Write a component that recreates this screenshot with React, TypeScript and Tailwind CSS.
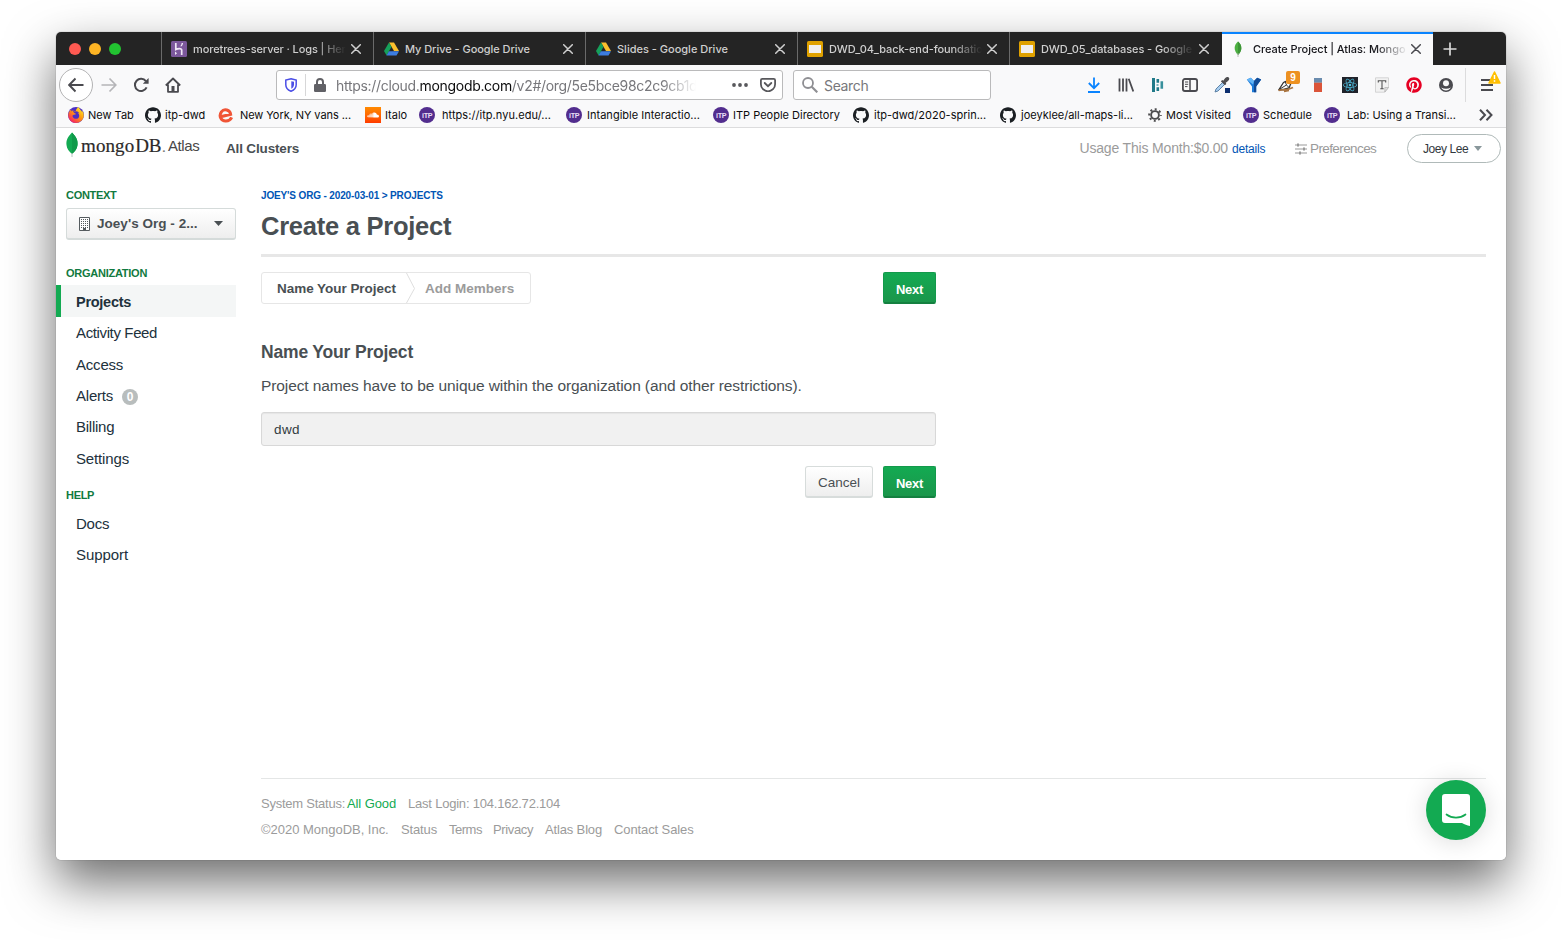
import type { ReactNode } from "react";
import { FaPinterest, FaSoundcloud } from "react-icons/fa";
import { SiGithub, SiReact, SiFirefoxbrowser } from "react-icons/si";

const DriveIcon = () => (
  <svg width="16" height="14" viewBox="-1 0 16 14">
    <path d="M5 .5h5l5 8.500h-5z" fill="#fbc02d" />
    <path d="M5 .5 7.500 4.800 2.600 13.400 0 9z" fill="#16a05a" />
    <path d="M4.900 9.200H15l-2.500 4.300h-10z" fill="#3d7de0" />
  </svg>
);

const SlidesIcon = () => (
  <svg width="16" height="16" viewBox="0 0 16 16">
    <rect width="16" height="16" rx="1.600" fill="#dfa100" />
    <rect x="2" y="4" width="12" height="8" fill="#f0efef" />
  </svg>
);

const HerokuIcon = () => (
  <svg width="16" height="16" viewBox="0 0 16 16">
    <rect width="16" height="16" rx="1.500" fill="#7c589c" />
    <path d="M4.800 2v6.600c1.700-.8 5.900-1.900 5.900.6V14" fill="none" stroke="#eee6f5" strokeWidth="1.700" />
    <path d="M4 10.400V14l2.100-1.800zM9.200 5.200c.9-.9 1.300-1.900 1.400-3.200h1.500c-.2 1.400-.6 2.400-1.400 3.200z" fill="#eee6f5" />
  </svg>
);

const LeafSmall = () => (
  <svg width="8" height="16" viewBox="0 0 8 16">
    <path d="M4 .5C8.200 4 8.700 9.200 4 14 -.7 9.200-.2 4 4 .5z" fill="#4caf41" />
    <path d="M4 .5C8.200 4 8.700 9.200 4 14z" fill="#3c9436" />
    <path d="M4 12v4" stroke="#aaa" strokeWidth=".8" />
  </svg>
);

const Cross = ({ color }: { color: string }) => (
  <svg width="10" height="10" viewBox="0 0 10 10" className="shrink-0">
    <path d="M.7.7l8.600 8.600M9.300.7.7 9.300" stroke={color} strokeWidth="1.500" strokeLinecap="round" />
  </svg>
);

const ItpIcon = () => (
  <svg width="16" height="16" viewBox="0 0 16 16">
    <circle cx="8" cy="8" r="8" fill="#522d8e" />
    <text x="8.200" y="10.900" textAnchor="middle" fontFamily="Liberation Sans" fontWeight="700" fontSize="7.200" letterSpacing="-.3" fill="#e8dff5">iTP</text>
  </svg>
);

const EventbriteIcon = () => (
  <svg width="16" height="16" viewBox="0 0 16 16">
    <path d="M2.600 9.800 12.600 7.300C12 2.900 6.200 1.200 3.400 4.800 .4 9 3.200 14.300 8 14c2.600-.1 4.600-1.500 5.700-3.700" fill="none" stroke="#f05537" strokeWidth="3" />
  </svg>
);

const GearIcon = () => (
  <svg width="14" height="14" viewBox="0 0 14 14" fill="none" stroke="#4b4b4d">
    <circle cx="7" cy="7" r="3.900" strokeWidth="1.900" />
    <circle cx="7" cy="7" r="5.800" strokeWidth="2" strokeDasharray="2 2.555" strokeDashoffset="1" />
  </svg>
);

type Tab = { title: string; icon: ReactNode; fade: boolean; track: string };
const tabs: Tab[] = [
  { title: "moretrees-server · Logs | Heroku", icon: <HerokuIcon />, fade: true, track: "tracking-[-0.1px]" },
  { title: "My Drive - Google Drive", icon: <DriveIcon />, fade: false, track: "tracking-[-0.05px]" },
  { title: "Slides - Google Drive", icon: <DriveIcon />, fade: false, track: "tracking-normal" },
  { title: "DWD_04_back-end-foundations", icon: <SlidesIcon />, fade: true, track: "tracking-[-0.08px]" },
  { title: "DWD_05_databases - Google Slides", icon: <SlidesIcon />, fade: true, track: "tracking-[-0.08px]" },
];

const fadeMask = "[mask-image:linear-gradient(to_right,black_122px,transparent_153px)]";

function TabBar() {
  return (
    <div className="flex h-[33px] shrink-0 bg-[#242424] text-[11px] font-medium text-[#cfcfcf]">
      <div className="flex w-[105px] items-center gap-2 pl-[13px]">
        <span className="size-3 rounded-full bg-[#ff5a52]" />
        <span className="size-3 rounded-full bg-[#fdb424]" />
        <span className="size-3 rounded-full bg-[#22c331]" />
      </div>
      {tabs.map((t) => (
        <div key={t.title} className="flex w-[212px] items-center border-l border-[#6a6a6a] pl-[9px]">
          <span className="flex w-[22px]">{t.icon}</span>
          <span className={`w-[153px] overflow-hidden whitespace-nowrap pt-px ${t.track} ${t.fade ? fadeMask : ""}`}>{t.title}</span>
          <span className="ml-[5px]"><Cross color="#cfcfcf" /></span>
        </div>
      ))}
      <div className="ml-px flex w-[211px] items-center border-t-2 border-[#0a84ff] bg-[#f9f9fa] pb-[2px] pl-[12px] text-[#15151a]">
        <span className="flex w-[19px]"><LeafSmall /></span>
        <span className="w-[153px] overflow-hidden whitespace-nowrap pt-px tracking-[-0.05px] [mask-image:linear-gradient(to_right,black_122px,transparent_155px)]">
          Create Project | Atlas: MongoDB
        </span>
        <span className="ml-[5px]"><Cross color="#4a4a4f" /></span>
      </div>
      <div className="flex items-center pl-[10px]">
        <svg width="14" height="14" viewBox="0 0 14 14"><path d="M7 .5v13M.5 7h13" stroke="#dadada" strokeWidth="1.700" /></svg>
      </div>
    </div>
  );
}

const extensionIcons: ReactNode[] = [
  <svg width="16" height="16" viewBox="0 0 16 16" fill="none" stroke="#0a84ff" strokeWidth="1.800"><path d="M8 .5v10.500M2.800 6 8 11.200 13.200 6M2 15h12" /></svg>,
  <svg width="16" height="16" viewBox="0 0 16 16" fill="none" stroke="#4a4a4f" strokeWidth="1.800"><path d="M1.500 1.500v13M5 1.500v13M8.500 1.500v13M10.700 1.800l4.600 12.600" /></svg>,
  <svg width="16" height="16" viewBox="0 0 16 16"><path d="M2 1h3v14H2zM6.500 2h2.600v3.800H6.500zM6.500 10.200h2.600V14H6.500z" fill="#217a89" /><path d="M10.500 4.300h2.600v7.500h-2.600z" fill="#38909c" /><path d="M6.500 7h2v2h-2z" fill="#7fb8bf" /></svg>,
  <svg width="16" height="16" viewBox="0 0 16 16" fill="none" stroke="#4a4a4f"><rect x=".9" y="2" width="14.200" height="12" rx="2" strokeWidth="1.800" /><path d="M8 2v12" strokeWidth="1.500" /><path d="M3 5h3.200M3 7.300h3.200M3 9.600h2.500" /></svg>,
  <svg width="16" height="16" viewBox="0 0 16 16"><path d="M1 15 2 12 8.500 5.500 10.500 7.500 4 14z" fill="#a7cdf0" stroke="#53799e" strokeWidth=".9" /><path d="m6.800 4.300 1.500-1.200 1 .6c1.800-3 4-4.600 5.500-3.200 1.300 1.600-.4 3.600-3.100 5.300l.6 1.100-1.400 1.400z" fill="#4d4d50" /><path d="M11 11h5v5h-5z" fill="#0c2e6e" /></svg>,
  <svg width="16" height="16" viewBox="0 0 16 16"><path d="M.8 2.500 4.800.8 8 4l3.200-3.200 4 1.700-5 7v5.700H6V9.500z" fill="#1c7ad8" /><path d="M.8 2.500 4.800.8 8 4 7 7.500z" fill="#63b5f7" /><path d="m8 4 3.200-3.200 4 1.700-5 7v5.700H8z" fill="#124b96" /></svg>,
  <svg width="16" height="16" viewBox="0 0 16 16"><path d="M1 12.500 5.500 5.500 9 4l4 2-2 5-5.500 1.500z" fill="#fff" stroke="#333" strokeWidth="1.300" /><path d="M1 12.500 8.500 8 7 4.500M8.500 8l2.800 2.800" stroke="#333" fill="none" /><path d="M.5 13.500c4-2 6 1.300 14.500-3M6 14.500l5-1" stroke="#aa7541" strokeWidth="1.700" fill="none" /></svg>,
  <svg width="16" height="16" viewBox="0 0 16 16"><path d="M4 1h8v4.500H4z" fill="#6b8cae" /><path d="M4 5.500h8V15H4z" fill="#db5439" /><path d="M4 5h8v1H4z" fill="#9c8c95" /></svg>,
  <span className="flex size-4 items-center justify-center bg-[#20232a]"><SiReact size={14} color="#4fbfdf" /></span>,
  <svg width="16" height="16" viewBox="0 0 16 16"><path d="M1.500.8h13v9.700l-3.700 4.700H1.500z" fill="#f2f2f2" stroke="#cdcdcd" strokeWidth=".8" /><path d="M10.800 15v-4.500h3.700z" fill="#ddd" stroke="#aaa" strokeWidth=".6" /><path d="M4.300 5.500V3.700h7.400v1.800M8 3.700v8M6.300 11.700h3.400" stroke="#555" strokeWidth="1.100" fill="none" /></svg>,
  <FaPinterest size={16} color="#e60023" />,
  <svg width="16" height="16" viewBox="0 0 16 16"><circle cx="8" cy="8" r="7" fill="#4a4a4f" /><circle cx="8" cy="6.200" r="3" fill="#f9f9fa" /><path d="M3.200 10.500c3 1.600 6.600 1.600 9.600 0-1 2-2.700 3-4.800 3s-3.800-1-4.800-3z" fill="#f9f9fa" /></svg>,
];

function Toolbar() {
  return (
    <div className="flex h-[40px] shrink-0 items-center bg-[#f9f9fa] pl-[3px] text-[14px]">
      <div className="flex size-[34px] items-center justify-center rounded-full border border-[#b3b3b4] bg-white">
        <svg width="16" height="16" viewBox="0 0 16 16" fill="none" stroke="#4a4a4f" strokeWidth="1.900"><path d="M15.500 8H1.500M7.500 1.500 1.200 8l6.300 6.500" /></svg>
      </div>
      <svg className="ml-2" width="16" height="16" viewBox="0 0 16 16" fill="none" stroke="#b5b5b8" strokeWidth="1.700"><path d="M.5 8h14M8.500 1.500 14.800 8l-6.300 6.500" /></svg>
      <svg className="ml-4" width="16" height="16" viewBox="0 0 16 16"><path d="M12.900 4.200A6.100 6.100 0 1 0 13.600 10.400" fill="none" stroke="#4a4a4f" strokeWidth="2" /><path d="M15.600 1v5.800H9.800z" fill="#4a4a4f" /></svg>
      <svg className="ml-4" width="16" height="16" viewBox="0 0 16 16"><path d="M.8 8.500 8 1.500l7.200 7M3 7.500v7.300h10V7.500" fill="none" stroke="#4a4a4f" strokeWidth="1.800" strokeLinejoin="round" /><path d="M6.500 9h3v5.500h-3z" fill="#4a4a4f" /></svg>
      <div className="ml-[95px] flex h-[30px] w-[507px] items-center rounded-[3px] border border-[#bababb] bg-white pl-[8px]">
        <svg width="12" height="14" viewBox="0 0 12 14"><path d="M6 .8 11.200 2v4.800c0 3-2.200 5.300-5.200 6.500C3 12.100.8 9.800.8 6.800V2z" fill="none" stroke="#4b4ee6" strokeWidth="1.500" /><path d="M6.300 3.300v7.500C8 9.800 9 8.300 9 6.500V3.800z" fill="#4b4ee6" /></svg>
        <span className="ml-[8px] h-[22px] w-px bg-[#d7d7d8]" />
        <svg className="ml-[8px]" width="12" height="14" viewBox="0 0 12 14"><rect y="6" width="12" height="8" rx="1.300" fill="#616166" /><path d="M3 6.500V4a3 3 0 0 1 6 0v2.500" fill="none" stroke="#616166" strokeWidth="2" /></svg>
        <span className="ml-[10px] w-[360px] overflow-hidden whitespace-nowrap tracking-[-0.31px] text-[#77777b] [mask-image:linear-gradient(to_right,black_325px,transparent_360px)]">
          https://cloud.<span className="text-[#0c0c0d]">mongodb.com</span>/v2#/org/5e5bce98c2c9cb1d
        </span>
        <svg className="ml-[36px]" width="16" height="4" viewBox="0 0 16 4" fill="#58585c"><circle cx="2" cy="2" r="1.900" /><circle cx="8" cy="2" r="1.900" /><circle cx="14" cy="2" r="1.900" /></svg>
        <svg className="ml-[12px]" width="16" height="14" viewBox="0 0 16 14" fill="none" stroke="#58585c" strokeWidth="1.800"><path d="M2.300.9h11.400c.8 0 1.400.6 1.400 1.400v3.900a7.100 7.100 0 0 1-14.200 0V2.300C.9 1.500 1.500.9 2.300.9z" /><path d="M4.700 5 8 8.200 11.300 5" strokeLinecap="round" /></svg>
      </div>
      <div className="ml-[10px] flex h-[30px] w-[198px] items-center rounded-[3px] border border-[#bababb] bg-white pl-[8px] text-[#77777b]">
        <svg width="16" height="16" viewBox="0 0 16 16" fill="none" stroke="#8f8f93"><circle cx="6" cy="6" r="5" strokeWidth="1.800" /><path d="m9.700 9.700 5.600 5.600" strokeWidth="2.200" /></svg>
        <span className="ml-[6px] tracking-[-0.35px]">Search</span>
      </div>
      <div className="ml-[95px] flex gap-4">
        {extensionIcons.map((icon, i) => (
          <div key={i} className="relative size-4">
            {icon}
            {i === 6 && <span className="absolute left-[8px] top-[-6px] flex h-[13px] w-[14px] items-center justify-center rounded-[2px] bg-[#ed9121] font-['Liberation_Sans'] text-[10px] font-bold text-white">9</span>}
          </div>
        ))}
      </div>
      <span className="ml-[11px] h-[34px] w-px bg-[#dcdcdd]" />
      <div className="relative ml-[15px]">
        <svg width="12" height="12" viewBox="0 0 12 12" stroke="#4a4a4f" strokeWidth="1.900"><path d="M0 1h12M0 6h12M0 11h12" /></svg>
        <svg className="absolute left-[7px] top-[-8px]" width="13" height="13" viewBox="0 0 13 13"><path d="M6.500 1 12 12H1z" fill="#ffbf00" stroke="#ffbf00" strokeLinejoin="round" strokeWidth="1.500" /><path d="M6.500 4v4M6.500 9.300v1.500" stroke="#fff" strokeWidth="1.500" /></svg>
      </div>
    </div>
  );
}

const github = <SiGithub size={16} color="#1b1f23" />;
const bookmarks: { label: string; icon: ReactNode; width: string; iconWidth: string }[] = [
  { label: "New Tab", icon: <FirefoxIcon />, width: "w-[77px]", iconWidth: "w-[20px]" },
  { label: "itp-dwd", icon: github, width: "w-[73px]", iconWidth: "w-[20px]" },
  { label: "New York, NY vans ...", icon: <EventbriteIcon />, width: "w-[147px] tracking-[-0.07px]", iconWidth: "w-[22px]" },
  { label: "Italo", icon: <span className="flex size-4 items-center justify-center bg-gradient-to-b from-[#ff8a00] to-[#ff3a00]"><FaSoundcloud size={12} color="#fff" /></span>, width: "w-[54px]", iconWidth: "w-[20px]" },
  { label: "https://itp.nyu.edu/...", icon: <ItpIcon />, width: "w-[147px] tracking-[0.05px]", iconWidth: "w-[23px]" },
  { label: "Intangible Interactio...", icon: <ItpIcon />, width: "w-[147px] tracking-[0.02px]", iconWidth: "w-[21px]" },
  { label: "ITP People Directory", icon: <ItpIcon />, width: "w-[140px]", iconWidth: "w-[20px]" },
  { label: "itp-dwd/2020-sprin...", icon: github, width: "w-[147px]", iconWidth: "w-[21px]" },
  { label: "joeyklee/all-maps-li...", icon: github, width: "w-[148px]", iconWidth: "w-[21px]" },
  { label: "Most Visited", icon: <GearIcon />, width: "w-[95px] tracking-[0.05px]", iconWidth: "w-[18px]" },
  { label: "Schedule", icon: <ItpIcon />, width: "w-[81px] tracking-[0.05px]", iconWidth: "w-[20px]" },
  { label: "Lab: Using a Transi...", icon: <ItpIcon />, width: "w-[155px]", iconWidth: "w-[23px]" },
];

function FirefoxIcon() {
  return (
    <span className="relative flex size-4 rounded-full bg-[#4b2fc4]">
      <svg width="0" height="0" className="absolute">
        <defs>
          <linearGradient id="fx" x1="1" y1="0" x2="0.200" y2="1">
            <stop offset="0.150" stopColor="#ffe226" />
            <stop offset="0.500" stopColor="#ff980e" />
            <stop offset="1" stopColor="#f5156c" />
          </linearGradient>
        </defs>
      </svg>
      <SiFirefoxbrowser size={16} className="fill-[url(#fx)]" />
    </span>
  );
}

function BookmarksBar() {
  return (
    <div className="flex h-[23px] shrink-0 items-center border-b border-[#dcdcdd] bg-[#f9f9fa] pb-[4px] pl-[12px] pt-[2px] text-[11px] text-[#0c0c0d]">
      {bookmarks.map((b) => (
        <div key={b.label} className={`flex shrink-0 items-center whitespace-nowrap ${b.width}`}>
          <span className={`flex shrink-0 ${b.iconWidth}`}>{b.icon}</span>
          {b.label}
        </div>
      ))}
      <svg width="14" height="12" viewBox="0 0 14 12" fill="none" stroke="#4a4a4f" strokeWidth="2"><path d="m1 .7 5 5.300-5 5.300M7.500.7l5 5.300-5 5.300" /></svg>
    </div>
  );
}

function PageHeader() {
  return (
    <header className="flex h-[40px] items-center pl-[10px] pr-[5px]">
      <svg className="mb-[6px]" width="12" height="26" viewBox="0 0 12 26">
        <path d="M6 .5C10.500 5 12 8.500 11.500 13c-.4 4-2.500 6.500-5.500 9C3 19.500.9 17 .5 13 0 8.500 1.500 5 6 .5z" fill="#13aa52" />
        <path d="M6 .5C10.500 5 12 8.500 11.500 13c-.4 4-2.500 6.500-5.500 9z" fill="#109a4a" />
        <path d="M6 21v4" stroke="#b8c4c2" />
      </svg>
      <span className="ml-[3px] w-[87px] whitespace-nowrap pb-[3px] font-['Liberation_Serif'] text-[19px] leading-6 text-[#2c2a29] [-webkit-text-stroke:0.2px]">
        <span className="tracking-[0.1px]">mongo</span><span className="ml-[1px] tracking-[-0.3px]">DB</span><span className="ml-px text-[15px] text-[#777]">.</span>
      </span>
      <span className="w-[58px] pb-[3px] text-[15px] tracking-[-0.4px] text-[#494747]">Atlas</span>
      <span className="pt-[2px] text-[13.500px] font-bold tracking-[-0.16px]">All Clusters</span>
      <span className="ml-auto whitespace-nowrap pt-px text-[14px] tracking-[-0.17px] text-[#9b9b9b]">Usage This Month:$0.00</span>
      <a className="ml-[4px] w-[63px] pt-[2px] text-[12px] tracking-[-0.2px] text-[#0055b5]">details</a>
      <svg className="mt-px" width="12" height="12" viewBox="0 0 12 12" stroke="#999" fill="none"><path d="M0 2h12M0 6h12M0 10h12" /><path d="M3 .5v3M9 4.500v3M5 8.500v3" strokeWidth="2" /></svg>
      <span className="ml-[3px] w-[97px] pt-[2px] text-[13.500px] tracking-[-0.6px] text-[#9b9b9b]">Preferences</span>
      <button className="flex h-[29px] w-[94px] items-center rounded-full border border-[#b0bab9] pl-[15px] text-[12px] tracking-[-0.45px] text-[#31383d]">
        <span className="w-[51px] pt-px text-left">Joey Lee</span>
        <svg width="8" height="5" viewBox="0 0 8 5"><path d="M0 0h8L4 5z" fill="#89979b" /></svg>
      </button>
    </header>
  );
}

const orgItems = [
  { label: "Activity Feed", track: "tracking-[-0.37px]" },
  { label: "Access", track: "tracking-[-0.2px]" },
  { label: "Alerts", track: "tracking-[-0.2px]" },
  { label: "Billing", track: "tracking-[-0.25px]" },
  { label: "Settings", track: "tracking-[-0.15px]" },
];

function Sidebar() {
  return (
    <aside className="w-[180px] pt-[20px] text-[15px] text-[#21313c]">
      <h3 className="ml-[10px] text-[11px] font-bold leading-[14px] tracking-[-0.3px] text-[#117a40]">CONTEXT</h3>
      <button className="ml-[10px] mt-[6px] flex h-[32px] w-[170px] items-center rounded-[3px] border border-b-2 border-[#d5dbda] bg-gradient-to-b from-white to-[#eeeeee] pl-[12px] text-[13.500px] font-bold text-[#494f53]">
        <svg width="11" height="14" viewBox="0 0 11 14">
          <path d="M.5.5h10v13H.500z" fill="#fff" stroke="#555b5f" />
          <path d="M2 2.500h7.500M2 4.500h7.500M2 6.500h7.500M2 8.500h7.500M2 10.500h7.500" stroke="#555b5f" strokeDasharray="1 1" />
          <path d="M4 11h3v3H4z" fill="#555b5f" />
        </svg>
        <span className="ml-[7px] w-[117px] pt-[2px] text-left tracking-[0.03px]">Joey's Org - 2...</span>
        <svg width="9" height="5" viewBox="0 0 9 5"><path d="M0 0h9L4.500 5z" fill="#494f53" /></svg>
      </button>
      <h3 className="ml-[10px] mt-[26px] text-[11px] font-bold leading-[14px] tracking-[-0.25px] text-[#117a40]">ORGANIZATION</h3>
      <nav className="mt-[5px]">
        <div className="flex h-[32px] items-center border-l-[5px] border-[#13aa52] bg-[#f4f6f6] pl-[15px] pt-[3px] text-[14.500px] font-bold tracking-[-0.27px]">Projects</div>
        {orgItems.map((item) => (
          <div key={item.label} className={`flex h-[31.300px] items-center pl-[20px] pt-[2px] ${item.track}`}>
            {item.label}
            {item.label === "Alerts" && <span className="ml-[9px] mt-[2px] flex size-4 items-center justify-center rounded-full bg-[#b8bdbd] text-[12px] font-bold tracking-normal text-white">0</span>}
          </div>
        ))}
      </nav>
      <h3 className="ml-[10px] mt-[14.500px] text-[11px] font-bold leading-[14px] tracking-[-0.3px] text-[#117a40]">HELP</h3>
      <nav className="mt-[6px] pl-[20px]">
        <div className="flex h-[31px] items-center pt-[2px] tracking-[-0.25px]">Docs</div>
        <div className="flex h-[31px] items-center pt-[2px] tracking-[-0.08px]">Support</div>
      </nav>
    </aside>
  );
}

const NextButton = () => (
  <button className="h-[32px] w-[53px] rounded-[2px] border border-b-2 border-[#13994b] border-b-[#148040] bg-gradient-to-b from-[#13aa52] to-[#1a964b] pt-[4px] text-[13px] font-bold tracking-[-0.3px] text-white">
    Next
  </button>
);

const footerLinks = [
  { label: "©2020 MongoDB, Inc.", cls: "w-[140px] tracking-[-0.02px]" },
  { label: "Status", cls: "w-[48px] tracking-[-0.14px]" },
  { label: "Terms", cls: "w-[44px] tracking-[-0.5px]" },
  { label: "Privacy", cls: "w-[52px] tracking-[-0.37px]" },
  { label: "Atlas Blog", cls: "w-[69px] tracking-[-0.15px]" },
  { label: "Contact Sales", cls: "w-[90px] tracking-[-0.1px]" },
];

function Main() {
  return (
    <main className="ml-[25px] flex w-[1225px] flex-col pt-[21px]">
      <div className="text-[10px] font-bold leading-[14px] tracking-[-0.14px] text-[#0055b5]">JOEY'S ORG - 2020-03-01 &gt; PROJECTS</div>
      <h1 className="mt-[7px] h-[44px] text-[25.500px] font-bold leading-[32px] tracking-[-0.25px]">Create a Project</h1>
      <div className="h-[3px] shrink-0 bg-[#e7e7e7]" />
      <div className="w-[675px]">
        <div className="mt-[15px] flex justify-between">
          <div className="flex h-[32px] w-[270px] items-center rounded-[3px] border border-[#e6e6e6] pl-[15px] text-[13.500px] font-bold">
            <span className="w-[129px] pt-[2px] tracking-[-0.04px]">Name Your Project</span>
            <svg width="9" height="30" viewBox="0 0 9 30"><path d="M.5 0 8.500 15.500.500 30" fill="none" stroke="#dedede" /></svg>
            <span className="ml-[10px] pt-[2px] text-[#9b9b9b]">Add Members</span>
          </div>
          <NextButton />
        </div>
        <h2 className="mt-[38px] text-[17.500px] font-bold leading-[20px] tracking-[-0.17px]">Name Your Project</h2>
        <p className="mt-[14px] whitespace-nowrap text-[15.500px] leading-[20px] tracking-[-0.1px]">
          Project names have to be unique within the organization (and other restrictions).
        </p>
        <div className="mt-[16px] flex h-[34px] items-center rounded-[3px] border border-[#d8d8d8] bg-[#f1f1f1] pl-[12px] pt-[2px] text-[13.500px] tracking-[0.4px] text-[#333b41] shadow-[inset_0_1px_1px_rgba(0,0,0,0.05)]">dwd</div>
        <div className="mt-[20px] flex justify-end gap-[10px]">
          <button className="h-[32px] w-[68px] rounded-[3px] border border-b-2 border-[#d7dcdb] bg-gradient-to-b from-white to-[#eeeeee] pt-[3px] text-[13.500px]">Cancel</button>
          <NextButton />
        </div>
      </div>
      <footer className="mt-auto h-[82px] border-t border-[#e4e6e6] pt-[12px] text-[13px] leading-[26px] text-[#9b9b9b]">
        <div className="flex whitespace-nowrap">
          <span className="w-[86px] tracking-[-0.24px]">System Status:</span>
          <span className="w-[61px] tracking-[-0.1px] text-[#13aa52]">All Good</span>
          <span className="tracking-[-0.21px]">Last Login: 104.162.72.104</span>
        </div>
        <div className="flex whitespace-nowrap">
          {footerLinks.map((l) => (
            <span key={l.label} className={l.cls}>{l.label}</span>
          ))}
        </div>
      </footer>
    </main>
  );
}

export default function App() {
  return (
    <div className="h-[940px] w-[1562px] overflow-hidden bg-white pl-[56px] pt-[32px]">
      <div className="relative h-[828px] w-[1450px] rounded-[5px] shadow-[0_0_1px_rgba(0,0,0,0.6),0_22px_50px_rgba(0,0,0,0.58)]">
        <div className="flex h-full flex-col overflow-hidden rounded-[5px] bg-white font-['Inter',sans-serif]">
          <TabBar />
          <Toolbar />
          <BookmarksBar />
          <div className="flex flex-1 flex-col font-['Liberation_Sans',sans-serif] text-[#494f53]">
            <PageHeader />
            <div className="flex flex-1">
              <Sidebar />
              <Main />
            </div>
          </div>
        </div>
        <button className="absolute bottom-[20px] right-[20px] flex size-[60px] items-center justify-center rounded-full bg-[#13aa52] shadow-[0_2px_24px_rgba(0,0,0,0.14)]">
          <svg width="28" height="32" viewBox="0 0 28 32">
            <path d="M3 0h22a3 3 0 0 1 3 3v29c-3-.5-5.500-1.800-8-3H3a3 3 0 0 1-3-3V3a3 3 0 0 1 3-3z" fill="#fff" />
            <path d="M4.500 20.500c5.500 4.200 13.500 4.200 19 0" stroke="#13aa52" strokeWidth="1.700" fill="none" strokeLinecap="round" />
          </svg>
        </button>
      </div>
    </div>
  );
}
